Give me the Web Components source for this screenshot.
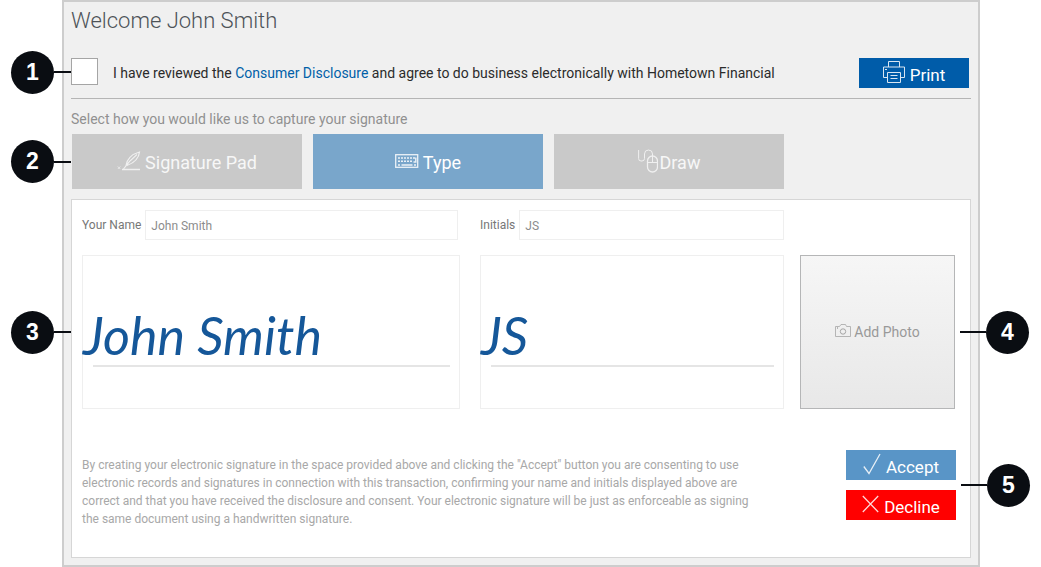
<!DOCTYPE html>
<html lang="en">
<head>
<meta charset="utf-8">
<meta name="viewport" content="width=device-width, initial-scale=1">
<title>Signature capture</title>
<style>
  body {
    margin: 0;
    padding: 0 61px 0 62px;
    background: #fff;
    font-family: Roboto, "Liberation Sans", sans-serif;
    font-size: 14px;
  }
</style>
</head>
<body>
<signature-page></signature-page>

<script>
const define = (name, html, setup) => {
  const template = document.createElement('template');
  template.innerHTML = html;
  customElements.define(name, class extends HTMLElement {
    constructor() {
      super();
      this.attachShadow({ mode: 'open' }).append(template.content.cloneNode(true));
    }
    connectedCallback() {
      if (setup) setup(this, this.shadowRoot);
    }
  });
};

const ICONS = {
  quill: [24, 20, `<path d="M5 18.500H23" stroke-width="1.500"/><path d="M.8 15.500l2.500 2.500M3.300 15.500l-2.500 2.500" stroke-width=".8"/><path d="M6.500 18C10 13 15 7.500 20 3.500M9 14.500C9.500 9 14.500 3 22.500 1C22 6.500 18 11.500 10 14.500" stroke-width="1.200"/>`],
  keyboard: [24, 14, `<rect x=".7" y=".7" width="22" height="12.600" stroke-width="1.300"/><path d="M3 4H21" stroke-width="1.600" stroke-dasharray="2 1"/><path d="M3 7.300H18" stroke-width="1.600" stroke-dasharray="2 1"/><path d="M20.800 3.500V8H18.500M3 11H5M6.500 11H17.500M19 11H21" stroke-width="1.400"/>`],
  mouse: [20, 24, `<path d="M.6 1V9.500Q.6 12 3 12H4Q6.500 12 6.500 9.500V5Q6.500 1 10.500 1Q14.500 1 14.500 5V7"/><rect x="9.500" y="7" width="10" height="16" rx="5" stroke-width="1.300"/><path d="M9.500 13.500H19.500M14.500 7V13.500"/>`],
  printer: [22, 22, `<path d="M5.500 6V.5H16.500V6M4.500 16.500H.5V6H21.500V16.500H17.500"/><path d="M4.500 11.500H17.500V21.500H4.500ZM7.500 14.500H14.500M7.500 17.500H14.500"/><path d="M2 8.500H4"/>`],
  camera: [16, 14, `<path d="M.5 2.500H4.500L6 .5H10.500L11.500 2.500H15.500V12.500H.5ZM2.500 3V5" stroke-width=".8"/><circle cx="8" cy="7.500" r="2.700"/>`],
  check: [18, 22, `<path d="M.8 13.500L6 20.500L17 1" stroke-width="1.300"/>`],
  cross: [17, 18, `<path d="M.8 1L16.200 17M16.200 1L.8 17" stroke-width="1.300"/>`]
};

define('line-icon', `
  <style>
    :host { display: block; flex: none; }
    svg { display: block; fill: none; stroke: currentColor; stroke-width: 1; }
  </style>
  <svg aria-hidden="true"></svg>`, (host, root) => {
  const [w, h, shapes] = ICONS[host.getAttribute('name')];
  const svg = root.querySelector('svg');
  svg.setAttribute('width', w);
  svg.setAttribute('height', h);
  svg.setAttribute('viewBox', `0 0 ${w} ${h}`);
  svg.innerHTML = shapes;
});

/* Numbered marker with a leader line, hung outside a positioned parent. */
define('callout-mark', `
  <style>
    :host {
      position: absolute;
      top: 0; bottom: 0; right: 100%;
      display: flex;
      align-items: center;
      pointer-events: none;
    }
    :host([side="right"]) { right: auto; left: 100%; flex-direction: row-reverse; }
    b {
      width: 43px; height: 43px;
      border-radius: 50%;
      background: #0a0d12;
      color: #fff;
      font: bold 23px/43px "Liberation Sans", Arial, sans-serif;
      text-align: center;
    }
    i { width: 17px; height: 2px; background: #0a0d12; }
    :host([side="right"]) i { width: 26px; }
  </style>
  <b><slot></slot></b><i></i>`);

define('app-button', `
  <style>
    :host { display: block; width: 110px; height: 30px; --bg: #005ca9; --fg: #fff; }
    :host([kind="accept"]) { --bg: #5995c7; }
    :host([kind="decline"]) { --bg: #f00; }
    :host([kind="method"]) { width: auto; height: 55px; flex: 0 1 230px; --bg: #c9c9c9; --fg: #f7f7f7; }
    :host([kind="method"][selected]) { --bg: #79a6cb; --fg: #fff; }
    :host([kind="photo"]) { width: auto; height: 154px; --fg: #999; }
    button {
      display: flex;
      align-items: center;
      justify-content: center;
      gap: 5px;
      box-sizing: border-box;
      width: 100%; height: 100%;
      margin: 0; padding: 0;
      border: 0;
      background: var(--bg);
      color: var(--fg);
      font: 17px/20px Roboto, "Liberation Sans", sans-serif;
      cursor: pointer;
    }
    span { padding-top: 3px; }
    :host([kind="method"]) button { gap: 4px; font-size: 18px; }
    :host([kind="method"]) span { padding-top: 2px; }
    :host([tight]) button { gap: 2px; }
    :host([kind="photo"]) button {
      gap: 3px;
      border: 1px solid #b5b6b7;
      background: linear-gradient(#f6f6f6, #e8e8e8);
      font-size: 14px;
    }
    :host([kind="photo"]) span { padding-top: 0; }
    ::slotted(line-icon) { margin-bottom: 2px; opacity: .85; }
  </style>
  <button type="button"><slot name="icon"></slot><span><slot></slot></span></button>`, (host, root) => {
  if (host.getAttribute('kind') === 'method')
    root.querySelector('button').setAttribute('aria-pressed', host.hasAttribute('selected'));
});

define('text-field', `
  <style>
    :host { display: flex; align-items: center; gap: 4px; color: #777; font-size: 12px; }
    label { flex: none; }
    input {
      flex: 1;
      min-width: 0;
      box-sizing: border-box;
      height: 30px;
      margin: 0; padding: 1px 5px 0;
      border: 1px solid #efefef;
      border-radius: 0;
      background: #fff;
      color: #8c8c8c;
      font: 12px Roboto, "Liberation Sans", sans-serif;
    }
  </style>
  <label for="field"></label><input id="field" type="text">`, (host, root) => {
  root.querySelector('label').textContent = host.getAttribute('label');
  root.querySelector('input').value = host.getAttribute('value');
});

/* Preview of the typed signature resting on its signing line. */
define('signature-box', `
  <style>
    :host {
      display: flex;
      flex-direction: column;
      box-sizing: border-box;
      height: 154px;
      padding: 45px 9px 0 10px;
      border: 1px solid #efefef;
      color: #155799;
    }
    p {
      margin: 0;
      height: 64px;
      border-bottom: 2px solid #e5e5e5;
      font: italic 52px/68px Lato, "Liberation Sans", cursive;
      text-indent: -10px;
      white-space: nowrap;
    }
  </style>
  <p><slot></slot></p>`);

define('consent-row', `
  <style>
    :host {
      position: relative;
      display: flex;
      align-items: flex-start;
      gap: 15px;
      padding: 0 2px 10px 0;
      border-bottom: 1px solid #b5b5b5;
    }
    .box { position: relative; flex: none; height: 28px; }
    input {
      appearance: none;
      display: block;
      box-sizing: border-box;
      width: 27px; height: 27px;
      margin: 0;
      border: 1px solid #a5a5a5;
      background: #fff;
    }
    input:checked { background: #005ca9; }
    label { flex: 1; line-height: 30px; color: #2b2b2b; }
    a { color: #0060a8; text-decoration: none; }
  </style>
  <div class="box"><input id="agree" type="checkbox"><callout-mark>1</callout-mark></div>
  <label for="agree">I have reviewed the <a href="#disclosure">Consumer Disclosure</a> and agree to do business electronically with Hometown Financial</label>
  <app-button><line-icon slot="icon" name="printer"></line-icon>Print</app-button>`);

define('method-picker', `
  <style>
    :host { display: block; }
    p { margin: 0 0 5px; line-height: 20px; color: #909090; }
    div { position: relative; display: flex; gap: 11px; padding-left: 1px; }
  </style>
  <p>Select how you would like us to capture your signature</p>
  <div>
    <callout-mark>2</callout-mark>
    <app-button kind="method"><line-icon slot="icon" name="quill"></line-icon>Signature Pad</app-button>
    <app-button kind="method" selected><line-icon slot="icon" name="keyboard"></line-icon>Type</app-button>
    <app-button kind="method" tight><line-icon slot="icon" name="mouse"></line-icon>Draw</app-button>
  </div>`);

define('signature-panel', `
  <style>
    :host {
      display: block;
      padding: 10px 15px 29px 10px;
      border: 1px solid #d6d6d6;
      background: #fff;
    }
    .grid {
      display: grid;
      grid-template-columns: minmax(0, 378fr) 20px minmax(0, 304fr) 16px 155px;
      row-gap: 15px;
    }
    .name { grid-column: 1; }
    .initials { grid-column: 3; }
    .photo { grid-column: 5; }
    .cell { position: relative; }
    .name callout-mark { margin-right: 11px; }
    .cell callout-mark[side] { margin-left: 5px; }
    text-field.name { margin-right: 2px; }
    footer {
      display: flex;
      align-items: flex-start;
      gap: 84px;
      margin: 41px -1px 0 0;
    }
    footer p {
      flex: 1;
      margin: 0;
      padding-top: 6px;
      color: #a8a8a8;
      font-size: 12px;
      line-height: 18px;
    }
    .actions { display: grid; gap: 10px; }
  </style>
  <div class="grid">
    <text-field class="name" label="Your Name" value="John Smith"></text-field>
    <text-field class="initials" label="Initials" value="JS"></text-field>
    <div class="cell name"><signature-box>John Smith</signature-box><callout-mark>3</callout-mark></div>
    <signature-box class="initials">JS</signature-box>
    <div class="cell photo">
      <app-button kind="photo"><line-icon slot="icon" name="camera"></line-icon>Add Photo</app-button>
      <callout-mark side="right">4</callout-mark>
    </div>
  </div>
  <footer>
    <p>By creating your electronic signature in the space provided above and clicking the "Accept" button you are consenting to use electronic records and signatures in connection with this transaction, confirming your name and initials displayed above are correct and that you have received the disclosure and consent. Your electronic signature will be just as enforceable as signing the same document using a handwritten signature.</p>
    <div class="cell actions">
      <app-button kind="accept"><line-icon slot="icon" name="check"></line-icon>Accept</app-button>
      <app-button kind="decline"><line-icon slot="icon" name="cross"></line-icon>Decline</app-button>
      <callout-mark side="right">5</callout-mark>
    </div>
  </footer>`);

define('signature-page', `
  <style>
    :host {
      display: block;
      padding: 5px 7px 7px;
      border: 2px solid #cdcdcd;
      background: #f0f0f0;
    }
    h1 { margin: 0 0 25px; font-size: 22px; font-weight: 300; line-height: 28px; color: #4d5358; }
    h1 { margin-bottom: 23px; }
    method-picker { margin: 10px 0; }
  </style>
  <h1>Welcome John Smith</h1>
  <consent-row></consent-row>
  <method-picker></method-picker>
  <signature-panel></signature-panel>`);
</script>
</body>
</html>
